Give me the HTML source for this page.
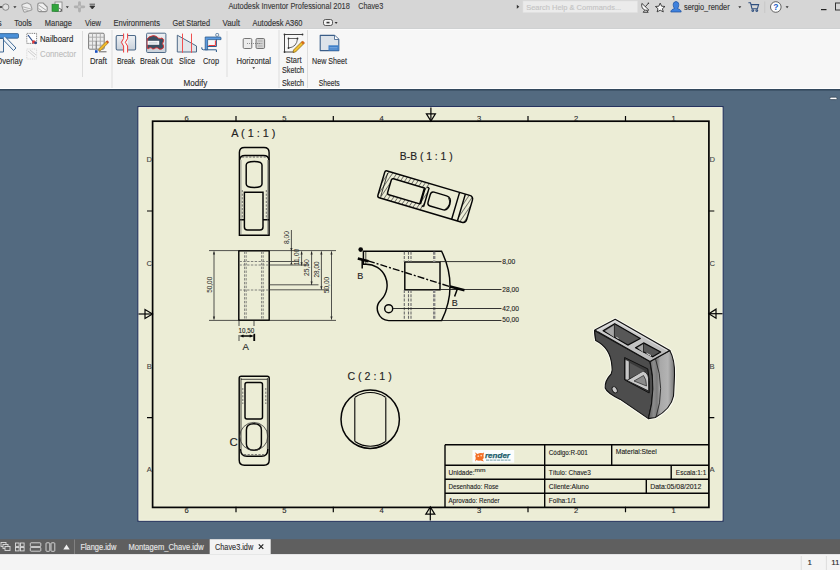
<!DOCTYPE html>
<html><head><meta charset="utf-8">
<style>
*{margin:0;padding:0}
html,body{width:840px;height:570px;overflow:hidden;background:#536a80}
svg{position:absolute;left:0;top:0;display:block}
text{font-family:"Liberation Sans",sans-serif}
</style></head><body>
<svg width="840" height="570" viewBox="0 0 840 570">

<rect x="0" y="0" width="840" height="28.3" fill="#d6d6d6"/>
<path d="M0 7 H2.5" stroke="#555" stroke-width="2"/>
<circle cx="5.7" cy="7.1" r="3.2" fill="#e2e2e2" stroke="#8a8a8a" stroke-width="1"/>
<path d="M13.3 6.2 H16.5 L14.9 8.2 Z" fill="#333"/>
<g transform="rotate(-18 26.6 7.2)"><path d="M22.5 4.8 Q22.5 3.2 24 3.2 H28.5 L31.2 6 V10.2 Q31.2 11.4 29.8 11.4 H24 Q22.5 11.4 22.5 10 Z" fill="#ededed" stroke="#9d9d9d" stroke-width="1.1"/><path d="M23 5.5 L30.5 10.5 M23.5 8.5 L27.5 11" stroke="#b0b0b0" stroke-width="1"/></g>
<path d="M37.8 4.6 Q37.8 3 39.4 3 H43.2 L47.2 7 V10 Q47.2 11.6 45.6 11.6 H39.4 Q37.8 11.6 37.8 10 Z" fill="#f1f1f1" stroke="#8e8e8e" stroke-width="1.1"/>
<path d="M38.5 5 L46.5 10.5 M38.5 8.5 L42 11" stroke="#a8a8a8" stroke-width="1"/>
<rect x="55" y="2" width="7" height="9.5" fill="#f2f2f2" stroke="#808080" stroke-width="0.8"/>
<rect x="52" y="4.2" width="6.4" height="7.2" fill="#31a43c" stroke="#1d7a28" stroke-width="0.6"/>
<path d="M59 8 L62 10 L60 11.5" fill="none" stroke="#444" stroke-width="0.8"/>
<path d="M65.8 6.3 H68.8 L67.3 8.2 Z" fill="#333"/>
<path d="M79.5 2.6 V11 M75.2 6.8 H83.8" stroke="#b0b0b0" stroke-width="2.8" stroke-linecap="round"/><circle cx="79.5" cy="6.8" r="1.3" fill="#c8c8c8"/>
<path d="M89.5 4.2 H95 M89.8 6 H94.8 L92.3 9 Z" stroke="#333" stroke-width="0.8" fill="#333"/>
<text x="228.4" y="8.9" font-size="8.3" fill="#3a3a3a" stroke="#3a3a3a" stroke-width="0.13" textLength="121.5" lengthAdjust="spacingAndGlyphs" >Autodesk Inventor Professional 2018</text>
<text x="358.2" y="8.9" font-size="8.3" fill="#3a3a3a" stroke="#3a3a3a" stroke-width="0.13" textLength="25" lengthAdjust="spacingAndGlyphs" >Chave3</text>
<path d="M516.8 4.8 L519.3 6.8 L516.8 8.8 Z" fill="#333"/>
<rect x="523" y="1" width="114.4" height="11.4" fill="#ebebeb" stroke="#e2e2e2" stroke-width="0.6"/>
<text x="526.2" y="9.5" font-size="7.8" fill="#c4c4c4" stroke="#c4c4c4" stroke-width="0.13" textLength="95" lengthAdjust="spacingAndGlyphs" >Search Help &amp; Commands...</text>
<path d="M641.9 3.4 C640.8 8.2 644 11.2 648.9 10.1 Z" fill="#fafafa" stroke="#333" stroke-width="0.9" stroke-linejoin="round"/>
<path d="M645.2 6.9 L648.3 3.4" stroke="#333" stroke-width="0.9"/><circle cx="648.4" cy="3.3" r="0.8" fill="#333"/>
<path d="M644.6 10.3 L643.2 12.3 H648.2 L646.8 10.6" fill="none" stroke="#333" stroke-width="0.9"/>
<path d="M660.2 3.1 L661.6 6.2 L665 6.5 L662.4 8.7 L663.3 11.9 L660.2 10.2 L657.1 11.9 L658 8.7 L655.4 6.5 L658.8 6.2 Z" fill="#fafafa" stroke="#333" stroke-width="0.9" stroke-linejoin="round"/>
<path d="M676 1.6 C673.5 1.6 673 4 673.3 5.8 C673.6 7.5 674.5 8.5 674.5 8.5 C672.5 9.2 670.8 10.2 670.8 12 H681.2 C681.2 10.2 679.5 9.2 677.5 8.5 C677.5 8.5 678.4 7.5 678.7 5.8 C679 4 678.5 1.6 676 1.6 Z" fill="#3f82de" stroke="#1d4f9c" stroke-width="0.7"/>
<text x="684" y="10" font-size="8.3" fill="#333333" stroke="#333333" stroke-width="0.13" textLength="45.6" lengthAdjust="spacingAndGlyphs" >sergio_render</text>
<path d="M738.3 6.3 H741.3 L739.8 8.2 Z" fill="#333"/>
<g fill="none" stroke="#2f4f7f" stroke-width="1.1"><path d="M748.4 2.8 H750.5 L752 8.8 H757.4 L758.6 4.6 H751"/><circle cx="752.8" cy="10.6" r="0.9"/><circle cx="756.8" cy="10.6" r="0.9"/></g>
<rect x="764.4" y="1.5" width="0.8" height="11.5" fill="#c4c4c4"/>
<circle cx="775.8" cy="7" r="5.3" fill="#fdfdfd" stroke="#555" stroke-width="0.9"/>
<text x="775.8" y="10.2" font-size="8.5" font-weight="bold" fill="#1a5fc8" text-anchor="middle">?</text>
<path d="M785.6 6.3 H788.6 L787.1 8.2 Z" fill="#333"/>
<rect x="821" y="9" width="5.5" height="1.2" fill="#222"/>
<rect x="835.5" y="3" width="6" height="7" fill="none" stroke="#333" stroke-width="1"/>
<text x="14.3" y="25.9" font-size="8.4" fill="#333333" stroke="#333333" stroke-width="0.13" textLength="17.6" lengthAdjust="spacingAndGlyphs" >Tools</text>
<text x="44.8" y="25.9" font-size="8.4" fill="#333333" stroke="#333333" stroke-width="0.13" textLength="27.1" lengthAdjust="spacingAndGlyphs" >Manage</text>
<text x="85" y="25.9" font-size="8.4" fill="#333333" stroke="#333333" stroke-width="0.13" textLength="16" lengthAdjust="spacingAndGlyphs" >View</text>
<text x="113.5" y="25.9" font-size="8.4" fill="#333333" stroke="#333333" stroke-width="0.13" textLength="46.5" lengthAdjust="spacingAndGlyphs" >Environments</text>
<text x="172.5" y="25.9" font-size="8.4" fill="#333333" stroke="#333333" stroke-width="0.13" textLength="37.5" lengthAdjust="spacingAndGlyphs" >Get Started</text>
<text x="222.5" y="25.9" font-size="8.4" fill="#333333" stroke="#333333" stroke-width="0.13" textLength="17.5" lengthAdjust="spacingAndGlyphs" >Vault</text>
<text x="252.5" y="25.9" font-size="8.4" fill="#333333" stroke="#333333" stroke-width="0.13" textLength="50" lengthAdjust="spacingAndGlyphs" >Autodesk A360</text>
<text x="-2.5" y="25.9" font-size="8.4" fill="#3a3a3a" stroke="#3a3a3a" stroke-width="0.13" >s</text>
<rect x="323.5" y="19.5" width="9" height="6" rx="2" fill="#f2f2f2" stroke="#333" stroke-width="0.8"/><rect x="326.5" y="21.8" width="3" height="1.6" fill="#333"/>
<path d="M334.6 22 H337.6 L336.1 24 Z" fill="#333"/>
<rect x="0" y="28.3" width="840" height="60.2" fill="#f7f7f7"/>
<rect x="0" y="88" width="840" height="1" fill="#ffffff"/><rect x="0" y="28.3" width="840" height="0.7" fill="#cfcfcf"/><rect x="0" y="29" width="840" height="0.8" fill="#fdfdfd"/>
<rect x="82.0" y="31" width="1" height="46" fill="#dddddd"/>
<rect x="111.5" y="30" width="1" height="58" fill="#dddddd"/>
<rect x="226.5" y="31" width="1" height="46" fill="#dddddd"/>
<rect x="278.5" y="30" width="1" height="58" fill="#dddddd"/>
<rect x="307.0" y="30" width="1" height="58" fill="#dddddd"/>
<text x="-3.8" y="63.6" font-size="8.6" fill="#2e2e2e" stroke="#2e2e2e" stroke-width="0.13" textLength="26.5" lengthAdjust="spacingAndGlyphs" >Overlay</text>
<text x="40" y="41.7" font-size="8.6" fill="#2a2a2a" stroke="#2a2a2a" stroke-width="0.13" textLength="33.2" lengthAdjust="spacingAndGlyphs" >Nailboard</text>
<text x="40" y="56.5" font-size="8.6" fill="#bdbdbd" stroke="#bdbdbd" stroke-width="0.13" textLength="36" lengthAdjust="spacingAndGlyphs" >Connector</text>
<text x="90" y="63.8" font-size="8.6" fill="#2e2e2e" stroke="#2e2e2e" stroke-width="0.13" textLength="16.8" lengthAdjust="spacingAndGlyphs" >Draft</text>
<text x="117" y="63.8" font-size="8.6" fill="#2e2e2e" stroke="#2e2e2e" stroke-width="0.13" textLength="18" lengthAdjust="spacingAndGlyphs" >Break</text>
<text x="140" y="63.8" font-size="8.6" fill="#2e2e2e" stroke="#2e2e2e" stroke-width="0.13" textLength="32.8" lengthAdjust="spacingAndGlyphs" >Break Out</text>
<text x="179" y="63.8" font-size="8.6" fill="#2e2e2e" stroke="#2e2e2e" stroke-width="0.13" textLength="16" lengthAdjust="spacingAndGlyphs" >Slice</text>
<text x="203" y="63.8" font-size="8.6" fill="#2e2e2e" stroke="#2e2e2e" stroke-width="0.13" textLength="16" lengthAdjust="spacingAndGlyphs" >Crop</text>
<text x="236.4" y="63.8" font-size="8.6" fill="#2e2e2e" stroke="#2e2e2e" stroke-width="0.13" textLength="34.6" lengthAdjust="spacingAndGlyphs" >Horizontal</text>
<path d="M252.3 67.2 H255.1 L253.7 69 Z" fill="#333"/>
<text x="285.8" y="63.4" font-size="8.6" fill="#2e2e2e" stroke="#2e2e2e" stroke-width="0.13" textLength="15.8" lengthAdjust="spacingAndGlyphs" >Start</text>
<text x="282" y="72.9" font-size="8.6" fill="#2e2e2e" stroke="#2e2e2e" stroke-width="0.13" textLength="22" lengthAdjust="spacingAndGlyphs" >Sketch</text>
<text x="312" y="63.8" font-size="8.6" fill="#2e2e2e" stroke="#2e2e2e" stroke-width="0.13" textLength="35" lengthAdjust="spacingAndGlyphs" >New Sheet</text>
<text x="183.6" y="85.6" font-size="8.6" fill="#2e2e2e" stroke="#2e2e2e" stroke-width="0.13" textLength="23.8" lengthAdjust="spacingAndGlyphs" >Modify</text>
<text x="282" y="85.6" font-size="8.6" fill="#2e2e2e" stroke="#2e2e2e" stroke-width="0.13" textLength="22" lengthAdjust="spacingAndGlyphs" >Sketch</text>
<text x="318.7" y="85.6" font-size="8.6" fill="#2e2e2e" stroke="#2e2e2e" stroke-width="0.13" textLength="21" lengthAdjust="spacingAndGlyphs" >Sheets</text>
<g>
<rect x="-2" y="33.6" width="20.5" height="4.6" rx="1" fill="#4a90d9" stroke="#2d5a8a" stroke-width="0.8"/>
<path d="M2.5 39 L13.5 50.5 L16 48 L5 36.5" fill="#eef3f8" stroke="#2d5a8a" stroke-width="0.9"/>
<path d="M-1 38.5 H3.5 V52 H-1 Z" fill="#f0f0f0" stroke="#2d5a8a" stroke-width="0.9"/>
</g>
<rect x="26.8" y="33.4" width="9.8" height="10" fill="#fff" stroke="#555" stroke-width="0.8" stroke-dasharray="1 0.8"/>
<path d="M28 35 L34 43" stroke="#2a4c8a" stroke-width="1.2"/><circle cx="33.8" cy="42" r="1.8" fill="#e03a3a"/><circle cx="35.6" cy="42.8" r="1.4" fill="#2a4c8a"/>
<rect x="26.8" y="49" width="9.8" height="10" fill="none" stroke="#cfcfcf" stroke-width="0.8" stroke-dasharray="1 0.8"/><path d="M28 51 L35 57 M30 50 L36 55" stroke="#cfcfcf" stroke-width="1"/>
<g>
<rect x="88.6" y="33.2" width="15.6" height="16" rx="1.2" fill="#ededed" stroke="#7a7a7a" stroke-width="1"/>
<path d="M92.5 33.4 V49" stroke="#a8a8a8" stroke-width="0.9"/>
<path d="M88.8 37.2 H104" stroke="#a8a8a8" stroke-width="0.9"/>
<path d="M96.39999999999999 33.4 V49" stroke="#a8a8a8" stroke-width="0.9"/>
<path d="M88.8 41.2 H104" stroke="#a8a8a8" stroke-width="0.9"/>
<path d="M100.3 33.4 V49" stroke="#a8a8a8" stroke-width="0.9"/>
<path d="M88.8 45.2 H104" stroke="#a8a8a8" stroke-width="0.9"/>
<path d="M96.2 41 V49" stroke="#777" stroke-width="0.9"/>
<path d="M99.2 48.5 L106.6 41 L108.4 42.8 L101 50.3 L98.6 50.9 Z" fill="#f0b828" stroke="#8a6a20" stroke-width="0.6"/>
<path d="M105.8 41.6 L107.2 40.2 L109 42 L107.6 43.4 Z" fill="#c8582a"/>
<rect x="95" y="50.2" width="2.6" height="2.6" fill="#1a4fc0"/><path d="M99 51.8 H106.5" stroke="#555" stroke-width="0.9"/>
</g>
<defs><linearGradient id="gpan" x1="0" y1="0" x2="0" y2="1"><stop offset="0" stop-color="#eef1f4"/><stop offset="1" stop-color="#c9d1da"/></linearGradient></defs>
<path d="M123.4 35.5 H117.4 Q116.2 35.5 116.2 36.7 V48.8 Q116.2 50 117.4 50 H123.4" fill="url(#gpan)" stroke="#4e6a88" stroke-width="1.1"/>
<path d="M127.6 35.5 H134.4 Q135.6 35.5 135.6 36.7 V48.8 Q135.6 50 134.4 50 H127.6" fill="url(#gpan)" stroke="#4e6a88" stroke-width="1.1"/>
<rect x="123.4" y="35" width="4.2" height="15.5" fill="#f7f7f7"/>
<path d="M123.6 33.5 V38.5 L121.3 42.3 L123.6 46 V52.5 M127.6 33.5 V38.5 L125.3 42.3 L127.6 46 V52.5" fill="none" stroke="#ee3a3a" stroke-width="1"/>
<rect x="146.6" y="33.2" width="19.3" height="19.3" rx="1" fill="url(#gpan)" stroke="#4e6a88" stroke-width="1"/>
<path d="M147.2 38.8 Q149 36.2 153.5 35.6 Q156.5 35.8 158.5 38.2 Q160.5 38.8 162 38 Q164.5 39.5 163.6 41.2 Q161.5 43.5 163.6 46 Q164 48.5 161.2 49.2 Q159.2 49.8 157.8 48 Q156 47 154.2 48.8 Q152.5 49.5 151.5 48 Q150 47 148.6 48.6 Q147.6 49.2 147.2 48 Z" fill="#3c4f61" stroke="#e42a2a" stroke-width="0.9"/>
<rect x="147.6" y="40.8" width="11.6" height="4" fill="#f4f6f8"/><path d="M149 42.9 H157.5" stroke="#b8c0c8" stroke-width="0.8"/>
<path d="M177.3 35.2 L196.5 46 V52 H177.3 Z" fill="#e2e6ea" stroke="#4e6a88" stroke-width="1" stroke-linejoin="round"/>
<path d="M182.5 33.6 V52.8 M191.5 33.6 V52.8" stroke="#f05050" stroke-width="1"/>
<path d="M216.4 38.5 V46.5 H206 M201.8 47.3 Q201.2 49.8 203.5 49.8 H216.4 V52" fill="none" stroke="#2d5a8a" stroke-width="1"/>
<path d="M205.2 37 H220 Q221 37 221 38 V39.6 H207.6 V49.8 H205.2 Z" fill="#5a9ae0" stroke="#2d5a8a" stroke-width="0.8"/>
<rect x="215.8" y="33.5" width="2.8" height="2.8" rx="0.8" fill="#f4f4f4" stroke="#2d5a8a" stroke-width="0.7"/>
<path d="M215.4 40.5 V45.5 H208.5" stroke="#ee3a3a" stroke-width="1" fill="none"/>
<rect x="243.2" y="38.5" width="8.6" height="10" rx="1.2" fill="#ececec" stroke="#666" stroke-width="0.9"/>
<rect x="256" y="38.5" width="8.6" height="10" rx="1.2" fill="#d2d2d2" stroke="#666" stroke-width="0.9"/>
<path d="M247 43.5 H260" stroke="#666" stroke-width="0.7" stroke-dasharray="1 1"/>
<path d="M258 41 H262.5 M258 43.5 H262.5 M258 46 H262.5" stroke="#888" stroke-width="0.5"/>
<path d="M284.5 34.5 H302.5 M284.5 34.5 V52 H294" fill="none" stroke="#444" stroke-width="1"/>
<path d="M288.5 38.5 H297.5 Q297 47 288.5 48 Z" fill="none" stroke="#555" stroke-width="0.9"/>
<circle cx="284.5" cy="34.5" r="0.9" fill="#333"/>
<circle cx="302.5" cy="34.5" r="0.9" fill="#333"/>
<circle cx="284.5" cy="52" r="0.9" fill="#333"/>
<circle cx="288.5" cy="38.5" r="0.9" fill="#333"/>
<circle cx="297.5" cy="38.5" r="0.9" fill="#333"/>
<circle cx="288.5" cy="48" r="0.9" fill="#333"/>
<path d="M293.5 50 L302 41.5 L304 43.5 L295.5 52 L293 52.5 Z" fill="#f2c231" stroke="#7a5a10" stroke-width="0.7"/><path d="M301 42.5 L302.8 40.7 L304.8 42.7 L303 44.5 Z" fill="#d56a1a"/>
<path d="M320.2 35.4 H334.5 L338.8 39.5 V50.6 H320.2 Z" fill="#dde3ea" stroke="#3a5d88" stroke-width="1.1" stroke-linejoin="round"/>
<path d="M334.5 35.4 V39.5 H338.8" fill="#fff" stroke="#3a5d88" stroke-width="0.8"/>
<rect x="328.5" y="45.3" width="10.3" height="5.3" fill="#3f7fc8"/><path d="M329.5 47.5 H337.5 M329.5 49 H337.5" stroke="#9cc3ee" stroke-width="0.5"/>
<rect x="0" y="89" width="840" height="450.2" fill="#536a80"/>
<rect x="0" y="89" width="840" height="1.6" fill="#34495d"/>
<rect x="829.8" y="97.2" width="7.2" height="2.4" rx="1.2" fill="#fff" stroke="#2e3e4e" stroke-width="0.7"/>
<rect x="138" y="106.6" width="585" height="414.6" fill="#ecedd6" stroke="#26335e" stroke-width="1.2"/>
<rect x="139" y="107.6" width="583" height="412.6" fill="none" stroke="#f7f7e6" stroke-width="0.8"/>
<rect x="152.6" y="121.2" width="556.3" height="386.2" fill="none" stroke="#050505" stroke-width="1.7"/>
<text x="186.7" y="120.6" font-size="7.6" fill="#2a2a2a" stroke="#2a2a2a" stroke-width="0.12" text-anchor="middle" >6</text>
<text x="186.7" y="513.2" font-size="7.6" fill="#2a2a2a" stroke="#2a2a2a" stroke-width="0.12" text-anchor="middle" >6</text>
<text x="284.4" y="120.6" font-size="7.6" fill="#2a2a2a" stroke="#2a2a2a" stroke-width="0.12" text-anchor="middle" >5</text>
<text x="284.4" y="513.2" font-size="7.6" fill="#2a2a2a" stroke="#2a2a2a" stroke-width="0.12" text-anchor="middle" >5</text>
<text x="381.5" y="120.6" font-size="7.6" fill="#2a2a2a" stroke="#2a2a2a" stroke-width="0.12" text-anchor="middle" >4</text>
<text x="381.5" y="513.2" font-size="7.6" fill="#2a2a2a" stroke="#2a2a2a" stroke-width="0.12" text-anchor="middle" >4</text>
<text x="479" y="120.6" font-size="7.6" fill="#2a2a2a" stroke="#2a2a2a" stroke-width="0.12" text-anchor="middle" >3</text>
<text x="479" y="513.2" font-size="7.6" fill="#2a2a2a" stroke="#2a2a2a" stroke-width="0.12" text-anchor="middle" >3</text>
<text x="576.2" y="120.6" font-size="7.6" fill="#2a2a2a" stroke="#2a2a2a" stroke-width="0.12" text-anchor="middle" >2</text>
<text x="576.2" y="513.2" font-size="7.6" fill="#2a2a2a" stroke="#2a2a2a" stroke-width="0.12" text-anchor="middle" >2</text>
<text x="673.6" y="120.6" font-size="7.6" fill="#2a2a2a" stroke="#2a2a2a" stroke-width="0.12" text-anchor="middle" >1</text>
<text x="673.6" y="513.2" font-size="7.6" fill="#2a2a2a" stroke="#2a2a2a" stroke-width="0.12" text-anchor="middle" >1</text>
<path d="M236 116 V121.5 M236 506.8 V512.3" stroke="#050505" stroke-width="1.2"/>
<path d="M333.3 116 V121.5 M333.3 506.8 V512.3" stroke="#050505" stroke-width="1.2"/>
<path d="M528 116 V121.5 M528 506.8 V512.3" stroke="#050505" stroke-width="1.2"/>
<path d="M625.5 116 V121.5 M625.5 506.8 V512.3" stroke="#050505" stroke-width="1.2"/>
<text x="151.9" y="161.8" font-size="7.6" fill="#444" stroke="#444" stroke-width="0.12" text-anchor="end" >D</text>
<text x="709.4" y="161.8" font-size="7.6" fill="#444" stroke="#444" stroke-width="0.12" >D</text>
<text x="151.9" y="265.5" font-size="7.6" fill="#444" stroke="#444" stroke-width="0.12" text-anchor="end" >C</text>
<text x="709.4" y="265.5" font-size="7.6" fill="#444" stroke="#444" stroke-width="0.12" >C</text>
<text x="151.9" y="368.8" font-size="7.6" fill="#444" stroke="#444" stroke-width="0.12" text-anchor="end" >B</text>
<text x="709.4" y="368.8" font-size="7.6" fill="#444" stroke="#444" stroke-width="0.12" >B</text>
<text x="151.9" y="472.1" font-size="7.6" fill="#444" stroke="#444" stroke-width="0.12" text-anchor="end" >A</text>
<text x="709.4" y="472.1" font-size="7.6" fill="#444" stroke="#444" stroke-width="0.12" >A</text>
<path d="M147 211 H152.6 M708.9 211 H714.3" stroke="#050505" stroke-width="1.2"/>
<path d="M147 417.7 H152.6 M708.9 417.7 H714.3" stroke="#050505" stroke-width="1.2"/>
<g fill="none" stroke="#050505" stroke-width="1.2"><path d="M430.9 107.5 V121"/><path d="M426.4 113.8 H435.4 L430.9 121 Z"/><path d="M430.3 520.5 V507"/><path d="M425.8 514.2 H434.8 L430.3 507 Z"/><path d="M138.5 314 H152.5"/><path d="M145 309.5 V318.5 L152.5 314 Z"/><path d="M722.5 313.7 H708.9"/><path d="M716 309.2 V318.2 L708.9 313.7 Z"/></g>
<text x="231.3" y="136.8" font-size="10.2" fill="#222" stroke="#222" stroke-width="0.12" textLength="44.2" lengthAdjust="spacingAndGlyphs" >A ( 1 : 1 )</text>
<g fill="none" stroke="#050505" stroke-width="1.45">
<path d="M239.4 235.2 V152.5 Q239.4 147.4 244.5 147.4 H264 Q269.1 147.4 269.1 152.5 V235.2 Z"/>
<path d="M239.6 160 Q240 155.5 245 155.5 H263.5 Q268.6 155.5 268.9 160"/>
<path d="M246.2 165 Q246.2 161.5 254.2 161.5 Q262 161.5 262 165 V184 Q262 187.5 254.2 187.5 Q246.2 187.5 246.2 184 Z"/>
<path d="M244.4 192.2 H263 V227 Q263 230 260 230 H247.4 Q244.4 230 244.4 227 Z"/>
<path d="M239.4 219.8 H244.4 M263 219.8 H269.1"/>
</g>
<g fill="none" stroke="#6a6a6a" stroke-width="0.6">
<path d="M241 160 V235 M267.6 160 V235"/>
</g>
<g fill="none" stroke="#555" stroke-width="0.8" stroke-dasharray="2.2 1.4">
<path d="M242 157 H267" stroke-width="1.1"/>
<path d="M242.3 190 V219 M266.3 190 V219"/>
</g>
<rect x="238.8" y="250.8" width="30.4" height="69.4" fill="none" stroke="#050505" stroke-width="1.45"/>
<g fill="none" stroke="#666" stroke-width="0.8" stroke-dasharray="2.4 1.4">
<path d="M244.6 251.5 V319.5 M246.2 251.5 V319.5 M261.6 251.5 V319.5 M263.2 251.5 V319.5"/>
<path d="M239.5 261.5 H268.5 M239.5 265 H268.5 M239.5 290 H268.5"/>
</g>
<g fill="none" stroke="#2a2a2a" stroke-width="0.8">
<path d="M209 250.6 H238.8 M269.2 250.6 H336 M209 320.4 H238.8 M269.2 320.4 H336"/>
<path d="M214 251.5 V319.5"/>
<path d="M291.4 230 V261 M301.6 251.5 V265.7 M311.6 251.5 V285 M321.4 251.5 V289.5 M331.5 251.5 V319.5"/>
<path d="M269.2 261.5 H299 M269.2 265 H309 M269.2 284.8 H318.5 M269.2 289.8 H329"/>
<path d="M239 321 V326 M254 321 V326 M239 335 V341 M254 335 V341"/>
</g>
<polygon points="214,251.2 212.9,254.39999999999998 215.1,254.39999999999998" fill="#2a2a2a"/>
<polygon points="214,319.8 212.9,316.6 215.1,316.6" fill="#2a2a2a"/>
<polygon points="331.5,251.2 330.4,254.39999999999998 332.6,254.39999999999998" fill="#2a2a2a"/>
<polygon points="331.5,319.8 330.4,316.6 332.6,316.6" fill="#2a2a2a"/>
<polygon points="321.4,251.2 320.29999999999995,254.39999999999998 322.5,254.39999999999998" fill="#2a2a2a"/>
<polygon points="321.4,289.4 320.29999999999995,286.2 322.5,286.2" fill="#2a2a2a"/>
<polygon points="311.6,251.2 310.5,254.39999999999998 312.70000000000005,254.39999999999998" fill="#2a2a2a"/>
<polygon points="311.6,284.6 310.5,281.40000000000003 312.70000000000005,281.40000000000003" fill="#2a2a2a"/>
<polygon points="301.6,251.2 300.5,254.39999999999998 302.70000000000005,254.39999999999998" fill="#2a2a2a"/>
<polygon points="301.6,265.4 300.5,262.2 302.70000000000005,262.2" fill="#2a2a2a"/>
<polygon points="291.4,251.2 290.29999999999995,248.0 292.5,248.0" fill="#2a2a2a"/>
<polygon points="291.4,261.2 290.29999999999995,264.4 292.5,264.4" fill="#2a2a2a"/>
<text x="209.3" y="284.8" font-size="7.4" fill="#222" text-anchor="middle" textLength="16" lengthAdjust="spacingAndGlyphs" transform="rotate(-90 209.3 284.8) translate(0 2.6)">50,00</text>
<text x="286" y="237.5" font-size="7.4" fill="#222" text-anchor="middle" textLength="13" lengthAdjust="spacingAndGlyphs" transform="rotate(-90 286 237.5) translate(0 2.6)">8,00</text>
<text x="296.5" y="257" font-size="7.4" fill="#222" text-anchor="middle" textLength="16.6" lengthAdjust="spacingAndGlyphs" transform="rotate(-90 296.5 257) translate(0 2.6)">11,00</text>
<text x="306.3" y="267.6" font-size="7.4" fill="#222" text-anchor="middle" textLength="17" lengthAdjust="spacingAndGlyphs" transform="rotate(-90 306.3 267.6) translate(0 2.6)">25,50</text>
<text x="316.3" y="269.5" font-size="7.4" fill="#222" text-anchor="middle" textLength="16" lengthAdjust="spacingAndGlyphs" transform="rotate(-90 316.3 269.5) translate(0 2.6)">28,00</text>
<text x="326" y="285" font-size="7.4" fill="#222" text-anchor="middle" textLength="16.6" lengthAdjust="spacingAndGlyphs" transform="rotate(-90 326 285) translate(0 2.6)">50,00</text>
<text x="238.6" y="332.6" font-size="7.6" fill="#1a1a1a" stroke="#1a1a1a" stroke-width="0.12" textLength="15.7" lengthAdjust="spacingAndGlyphs" >10,50</text>
<path d="M242 336 H251.5" fill="none" stroke="#050505" stroke-width="1.5"/>
<polygon points="239.2,336 243.5,334.6 243.5,337.4" fill="#050505"/><polygon points="254,336 249.7,334.6 249.7,337.4" fill="#050505"/>
<path d="M254.3 333.8 V341" stroke="#050505" stroke-width="1.7"/>
<text x="245.8" y="349.5" font-size="9.6" fill="#1a1a1a" stroke="#1a1a1a" stroke-width="0.12" text-anchor="middle" >A</text>
<text x="399.8" y="159.8" font-size="10.2" fill="#222" stroke="#222" stroke-width="0.12" textLength="52.9" lengthAdjust="spacingAndGlyphs" >B-B ( 1 : 1 )</text>
<g transform="translate(385.3 170.4) rotate(16.5)">
<defs><pattern id="hat" patternUnits="userSpaceOnUse" width="3.6" height="3.6" patternTransform="rotate(18)"><rect width="3.6" height="3.6" fill="#ecedd6"/><path d="M0 0 V3.6" stroke="#2a2a2a" stroke-width="1.15"/></pattern><clipPath id="clipL"><path d="M0 0 H47 V28 H0 Z"/></clipPath></defs>
<path d="M1.5 0 H47 V28 H1.5 Q0 28 0 26.5 V1.5 Q0 0 1.5 0 Z M8.5 7.5 Q8.5 5.7 10.3 5.7 H42.5 V22.3 H10.3 Q8.5 22.3 8.5 20.5 Z" fill="url(#hat)" fill-rule="evenodd"/>
<path d="M83.5 0 H88 Q92 0 92 4 V24 Q92 28 88 28 H83.5 Z" fill="url(#hat)"/>
<g fill="none" stroke="#050505" stroke-width="1.45">
<path d="M2 0 H88 Q92 0 92 4 V24 Q92 28 88 28 H2 Q0 28 0 26 V2 Q0 0 2 0 Z"/>
<path d="M8.5 7.5 Q8.5 5.7 10.3 5.7 H42.5 V22.3 H10.3 Q8.5 22.3 8.5 20.5 Z"/>
<path d="M43.3 5.7 V22.3 M47 4.3 V23.7 M47 4.3 H45 M47 23.7 H45"/>
<path d="M53 7 H66 Q71.5 7 71.5 14.2 Q71.5 21.4 66 21.4 H53 Q50 21.4 50 18 V10.4 Q50 7 53 7 Z"/>
<path d="M68.5 8.3 Q73.5 14.2 68.5 20.2" stroke-width="0.8"/>
<path d="M77.5 0 V28 M83.5 0 V28"/>
</g>
<path d="M3 1.8 V26.2" stroke="#050505" stroke-width="0.7"/>
</g>
<g fill="none" stroke="#050505" stroke-width="1.45">
<path d="M363.4 251.2 H441.6 Q458.5 286 441.6 320.6 H388.7 A12 12 0 0 1 381 300 A21 21 0 0 0 365.5 264.2 H363.4 Z"/>
<circle cx="388.7" cy="308.7" r="4"/>
<rect x="404.8" y="262" width="35.2" height="27.8"/>
</g>
<path d="M365.8 251.5 V264" stroke="#050505" stroke-width="0.7"/>
<g fill="none" stroke="#6a6a6a" stroke-width="1.1" stroke-dasharray="3 1.3">
<path d="M404.3 251.8 V262 M404.3 290 V320 M408.5 251.8 V262 M408.5 290 V320 M411 251.8 V262 M411 290 V320"/>
</g>
<g fill="none" stroke="#858585" stroke-width="2.4" stroke-dasharray="3 1.3">
<path d="M434.2 251.8 V262 M434.2 290 V320"/>
</g>
<g fill="none" stroke="#1e1e1e" stroke-width="0.9">
<path d="M440 261.6 H501.5 M440 289.5 H501.5 M392.7 308.5 H501.5 M441.6 320.5 H501.5"/>
</g>
<text x="502.3" y="264" font-size="7.4" fill="#222" stroke="#222" stroke-width="0.12" textLength="13" lengthAdjust="spacingAndGlyphs" >8,00</text>
<text x="502.3" y="291.9" font-size="7.4" fill="#222" stroke="#222" stroke-width="0.12" textLength="16.6" lengthAdjust="spacingAndGlyphs" >28,00</text>
<text x="502.3" y="311" font-size="7.4" fill="#222" stroke="#222" stroke-width="0.12" textLength="16.6" lengthAdjust="spacingAndGlyphs" >42,00</text>
<text x="502.3" y="322.4" font-size="7.4" fill="#222" stroke="#222" stroke-width="0.12" textLength="16.6" lengthAdjust="spacingAndGlyphs" >50,00</text>
<path d="M368 260.8 L450 286.6" stroke="#050505" stroke-width="1.4" stroke-dasharray="7 2 2 2" fill="none"/>
<path d="M357.8 258.5 L368.5 261.2 M450 286.4 L464.5 290.2" stroke="#050505" stroke-width="2.6"/>
<path d="M362.2 259.5 V268.5 M457.5 288.5 L454.6 296.5" stroke="#050505" stroke-width="1.5"/>
<circle cx="360.7" cy="249.6" r="2.3" fill="#050505"/>
<text x="360.3" y="278.6" font-size="9" fill="#222" stroke="#222" stroke-width="0.12" text-anchor="middle" >B</text>
<text x="454.7" y="306.3" font-size="9" fill="#222" stroke="#222" stroke-width="0.12" text-anchor="middle" >B</text>
<g fill="none" stroke="#050505" stroke-width="1.45">
<path d="M239.2 378.2 Q239.2 376.2 241.2 376.2 H267.2 Q269.2 376.2 269.2 378.2 V460 Q269.2 465.2 264 465.2 H244.4 Q239.2 465.2 239.2 460 Z"/>
<path d="M247 382.4 H260.5 Q262.5 382.4 262.5 384.4 V417 Q262.5 419 260.5 419 H247 Q245 419 245 417 V384.4 Q245 382.4 247 382.4 Z"/>
<path d="M246.4 430 Q246.4 423.8 253.9 423.8 Q261.4 423.8 261.4 430 V444 Q261.4 450.2 253.9 450.2 Q246.4 450.2 246.4 444 Z"/>
<path d="M240.6 449 Q240.6 456.3 247 456.3 H261.5 Q267.8 456.3 267.8 449"/>
</g>
<g fill="none" stroke="#050505" stroke-width="0.7"><path d="M241 378 V449 M267.4 378 V449 M241 379.3 H267.4"/></g>
<g fill="none" stroke="#555" stroke-width="0.8" stroke-dasharray="2.2 1.4"><path d="M244 454.6 H264.5 M242.8 388 V404 M265.8 388 V404"/></g>
<circle cx="253.8" cy="436.4" r="14" fill="none" stroke="#333" stroke-width="0.8"/>
<text x="233.5" y="446.4" font-size="11.4" fill="#222" stroke="#222" stroke-width="0.12" text-anchor="middle" >C</text>
<text x="347.5" y="379.8" font-size="10.2" fill="#222" stroke="#222" stroke-width="0.12" textLength="44.2" lengthAdjust="spacingAndGlyphs" >C ( 2 : 1 )</text>
<circle cx="370.2" cy="419.2" r="29.2" fill="none" stroke="#050505" stroke-width="1.5"/>
<g fill="none" stroke="#050505" stroke-width="1.1">
<path d="M355 397.2 A27 27 0 0 1 385.6 397.2 M355 441.5 A27 27 0 0 0 385.6 441.5"/>
<path d="M354.8 397.4 V441.5 M385.8 397.4 V441.5"/>
</g>
<defs><linearGradient id="gfront" x1="0" y1="0" x2="1" y2="0"><stop offset="0" stop-color="#5a5a5a"/><stop offset="0.2" stop-color="#8c8c8c"/><stop offset="0.33" stop-color="#7a7a7a"/><stop offset="0.45" stop-color="#a8a8a8"/><stop offset="0.75" stop-color="#b4b4b4"/><stop offset="1" stop-color="#767676"/></linearGradient><linearGradient id="gtop" x1="0" y1="0" x2="1" y2="1"><stop offset="0" stop-color="#d2d2d2"/><stop offset="1" stop-color="#b8b8b8"/></linearGradient></defs>
<path d="M594.5 330.5 L615.2 319.3 L669.8 350.4 Q675 360 674.5 375 Q674 388 673.5 396 Q671 409 655.3 417.5 L648.4 418.6 L620.3 399.4 Q607 393 605.2 388 Q604.5 381 611.2 374 Q612.8 370 611.9 366 C611 352 603 344 595.7 340.4 Z" fill="none" stroke="#fbfbf0" stroke-width="3.2"/>
<path d="M594.5 330.5 L595.7 340.4" stroke="#111" stroke-width="1.1"/>
<path d="M594.5 330.5 L650 361.5 Q656.5 389 648.4 418.6 L620.3 399.4 Q607 393 605.2 388 Q604.5 381 611.2 374 Q612.8 370 611.9 366 C611 352 603 344 595.7 340.4 Z" fill="#4d4d4d" stroke="#111" stroke-width="1.1" stroke-linejoin="round"/>
<path d="M650 361.5 L669.8 350.4 Q675 360 674.5 375 Q674 388 673.5 396 Q671 409 655.3 417.5 L648.4 418.6 Q656.5 389 650 361.5 Z" fill="url(#gfront)" stroke="#111" stroke-width="1.1" stroke-linejoin="round"/>
<path d="M655.5 358.8 Q665.5 389 656 417" fill="none" stroke="#262626" stroke-width="0.9"/>
<path d="M594.8 330 L615.2 319.3 L669.8 350.4 L650 361.5 Z" fill="url(#gtop)" stroke="#111" stroke-width="1.1" stroke-linejoin="round"/>
<path d="M597 331 L615.2 321 L667 350.5" fill="none" stroke="#e6e6e6" stroke-width="0.8"/>
<path d="M603.1 330.8 L614.7 323.7 L640.3 338.5 L627.8 345.1 Z" fill="#575757" stroke="#0a0a0a" stroke-width="1.2" stroke-linejoin="round"/>
<path d="M605 330.9 L614.2 325.3 L614.2 337.3 Z" fill="#a6a6a6"/>
<path d="M614.4 325 V337.5" stroke="#1a1a1a" stroke-width="0.8"/>
<path d="M616.3 337.3 L618.6 338.6" stroke="#e8e8e8" stroke-width="0.9"/>
<path d="M635.5 347.7 L643.6 342.9 L660.7 352 L652.7 356.8 Z" fill="#575757" stroke="#0a0a0a" stroke-width="1.2" stroke-linejoin="round"/>
<path d="M637.3 347.8 L643.3 344.3 L643.3 352.5 Z" fill="#a6a6a6"/>
<path d="M643.5 344 V352.6" stroke="#1a1a1a" stroke-width="0.8"/>
<path d="M646.5 353.3 L651 355.6" stroke="#e8e8e8" stroke-width="1"/>
<path d="M624.6 357.5 L647.8 368.9 Q650 380 649.2 393 L624.6 379.8 Z" fill="#3a3a3a" stroke="#111" stroke-width="1"/>
<path d="M625.6 360 L628.8 361.6 L628.8 380.5 L625.6 379 Z" fill="#c8c8c8"/>
<path d="M627 380.5 L643 371 Q648 373 648.5 378 L648.7 391 Z" fill="#c9c9c9" stroke="#111" stroke-width="0.8"/>
<path d="M634 381 L643.5 375.5 Q646.5 379 646.5 386 Z" fill="#8c8c8c" stroke="#111" stroke-width="0.6"/>
<path d="M630 363 L645 371 L630 378 Z" fill="#6a6a6a" opacity="0.6"/>
<ellipse cx="614.7" cy="389.8" rx="2.3" ry="3.3" transform="rotate(-30 614.7 389.8)" fill="#c8c8c8" stroke="#1a1a1a" stroke-width="0.9"/>
<g fill="none" stroke="#050505" stroke-width="1.4">
<path d="M445 444.8 H708.9 M445 444.8 V507 M445 465.2 H708.9 M445 479.2 H708.9 M445 493.3 H708.9"/>
<path d="M544.7 444.8 V507 M611.7 444.8 V465.2 M671.2 465.2 V479.2 M646.3 479.2 V493.3"/>
</g>
<text x="448.5" y="474.7" font-size="7.4" fill="#222" stroke="#222" stroke-width="0.12" textLength="26" lengthAdjust="spacingAndGlyphs" >Unidade:</text>
<text x="474.5" y="471.6" font-size="6" fill="#222" stroke="#222" stroke-width="0.12" textLength="11" lengthAdjust="spacingAndGlyphs" >mm</text>
<text x="448.5" y="488.8" font-size="7.4" fill="#222" stroke="#222" stroke-width="0.12" textLength="50" lengthAdjust="spacingAndGlyphs" >Desenhado: Rose</text>
<text x="448.5" y="502.7" font-size="7.4" fill="#222" stroke="#222" stroke-width="0.12" textLength="51" lengthAdjust="spacingAndGlyphs" >Aprovado: Render</text>
<text x="548.8" y="454.6" font-size="7.4" fill="#222" stroke="#222" stroke-width="0.12" textLength="39" lengthAdjust="spacingAndGlyphs" >Código:R-001</text>
<text x="548.8" y="474.7" font-size="7.4" fill="#222" stroke="#222" stroke-width="0.12" textLength="42" lengthAdjust="spacingAndGlyphs" >Título: Chave3</text>
<text x="548.8" y="488.8" font-size="7.4" fill="#222" stroke="#222" stroke-width="0.12" textLength="40" lengthAdjust="spacingAndGlyphs" >Cliente:Aluno</text>
<text x="548.8" y="502.7" font-size="7.4" fill="#222" stroke="#222" stroke-width="0.12" textLength="27.5" lengthAdjust="spacingAndGlyphs" >Folha:1/1</text>
<text x="615.8" y="453.8" font-size="7.4" fill="#222" stroke="#222" stroke-width="0.12" textLength="41" lengthAdjust="spacingAndGlyphs" >Material:Steel</text>
<text x="675.8" y="474.7" font-size="7.4" fill="#222" stroke="#222" stroke-width="0.12" textLength="30.5" lengthAdjust="spacingAndGlyphs" >Escala:1:1</text>
<text x="650.3" y="488.8" font-size="7.4" fill="#222" stroke="#222" stroke-width="0.12" textLength="51" lengthAdjust="spacingAndGlyphs" >Data:05/08/2012</text>
<rect x="472.5" y="450" width="41.7" height="12.7" fill="#fbfdfd"/>
<path d="M474.8 452.2 L477.5 454 Q480 452.5 482.5 453.2 L484 452.5 L483.5 455.5 Q484.5 458 482.5 459.5 L484 461.5 L480.5 460.5 Q478 461 476.5 460 L475 461.5 L475.8 458 Q474.5 455.5 476 454.5 Z" fill="#f36f25"/>
<circle cx="478.3" cy="456.2" r="0.9" fill="#ffd0b0"/><circle cx="481.2" cy="455.6" r="0.9" fill="#ffd0b0"/>
<text x="485" y="457.6" font-size="7.4" font-weight="bold" font-style="italic" fill="#1d5e6c" textLength="25" lengthAdjust="spacingAndGlyphs" stroke="#1d5e6c" stroke-width="0.25">render</text>
<path d="M486 460.1 H510.5" stroke="#5b8f9a" stroke-width="0.9" stroke-dasharray="3 0.7"/>
<rect x="0" y="539.2" width="840" height="15" fill="#5f5f5f"/>
<g fill="none" stroke="#dcdcdc" stroke-width="0.9"><rect x="1" y="542.5" width="5" height="4"/><rect x="3" y="544.5" width="5" height="4" fill="#5f5f5f"/><rect x="5" y="546.5" width="5" height="4" fill="#5f5f5f"/></g>
<g fill="none" stroke="#dcdcdc" stroke-width="0.9"><rect x="15.5" y="543" width="3.6" height="3.4"/><rect x="20.5" y="543" width="3.6" height="3.4"/><rect x="15.5" y="547.5" width="3.6" height="3.4"/><rect x="20.5" y="547.5" width="3.6" height="3.4"/></g>
<g fill="none" stroke="#dcdcdc" stroke-width="0.9"><rect x="30.3" y="542.8" width="10.5" height="3.8" rx="0.8"/><rect x="30.3" y="547.4" width="10.5" height="3.8" rx="0.8"/></g>
<g fill="none" stroke="#dcdcdc" stroke-width="0.9"><rect x="46" y="542.8" width="3.8" height="8.5" rx="0.8"/><rect x="51" y="542.8" width="3.8" height="8.5" rx="0.8"/></g>
<path d="M63.3 549.5 H69.7 L66.5 544.5 Z" fill="#f0f0f0"/>
<rect x="74.2" y="539.5" width="0.8" height="14.5" fill="#8a8a8a"/>
<text x="80.4" y="550.2" font-size="8.6" fill="#e8e8e8" stroke="#e8e8e8" stroke-width="0.13" textLength="36" lengthAdjust="spacingAndGlyphs" >Flange.idw</text>
<text x="128.6" y="550.2" font-size="8.6" fill="#e8e8e8" stroke="#e8e8e8" stroke-width="0.13" textLength="75" lengthAdjust="spacingAndGlyphs" >Montagem_Chave.idw</text>
<rect x="209.7" y="539.2" width="61" height="15.2" fill="#f3f3f3"/>
<text x="215" y="550.2" font-size="8.6" fill="#333" stroke="#333" stroke-width="0.13" textLength="38.2" lengthAdjust="spacingAndGlyphs" >Chave3.idw</text>
<path d="M258.8 544.3 L263.3 548.8 M263.3 544.3 L258.8 548.8" stroke="#222" stroke-width="1.2"/>
<rect x="0" y="554.2" width="840" height="15.8" fill="#f4f4f4"/>
<rect x="0" y="554.2" width="840" height="0.8" fill="#e8e8e8"/>
<rect x="800.8" y="556" width="0.8" height="14" fill="#d8d8d8"/><rect x="825.9" y="556" width="0.8" height="14" fill="#d8d8d8"/>
<text x="807.6" y="565.3" font-size="8" fill="#2a2a2a" stroke="#2a2a2a" stroke-width="0.13" >1</text>
<text x="831.2" y="565.3" font-size="8" fill="#2a2a2a" stroke="#2a2a2a" stroke-width="0.13" >11</text>
</svg></body></html>
